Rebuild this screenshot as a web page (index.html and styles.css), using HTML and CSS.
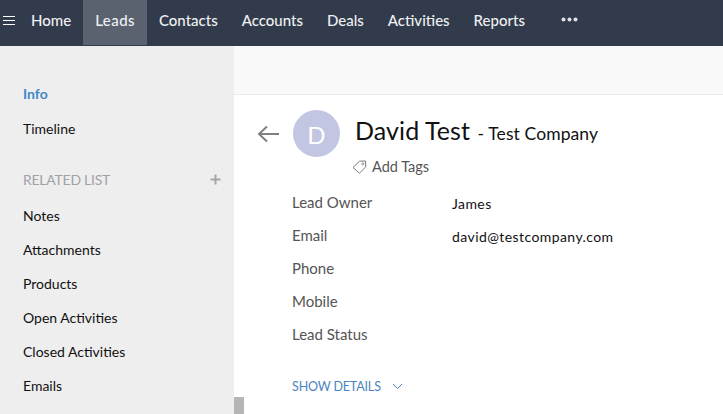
FILE: index.html
```html
<!DOCTYPE html>
<html lang="en">
<head>
<meta charset="utf-8">
<title>David Test</title>
<link rel="stylesheet" href="styles.css">
</head>
<body>
<nav class="topbar">
  <svg class="burger" width="14" height="10" viewBox="0 0 14 10"><path d="M0 .5h12M0 4.5h12M0 8.5h12" stroke="#fff" stroke-width="1"/></svg>
  <a class="tab">Home</a>
  <a class="tab active">Leads</a>
  <a class="tab">Contacts</a>
  <a class="tab">Accounts</a>
  <a class="tab">Deals</a>
  <a class="tab">Activities</a>
  <a class="tab">Reports</a>
  <svg class="more" width="17" height="5" viewBox="0 0 17 5"><circle cx="2.5" cy="2.5" r="2" fill="#dfe1e5"/><circle cx="8.5" cy="2.5" r="2" fill="#dfe1e5"/><circle cx="14.5" cy="2.5" r="2" fill="#dfe1e5"/></svg>
</nav>
<div class="layout">
  <aside class="sidebar">
    <a class="side-link current">Info</a>
    <a class="side-link timeline">Timeline</a>
    <div class="side-head"><span>RELATED LIST</span><svg width="11" height="11" viewBox="0 0 11 11"><path d="M5.5 0.5v10M0.5 5.5h10" stroke="#a3a5a9" stroke-width="2"/></svg></div>
    <ul class="side-list">
      <li>Notes</li>
      <li>Attachments</li>
      <li>Products</li>
      <li>Open Activities</li>
      <li>Closed Activities</li>
      <li>Emails</li>
    </ul>
  </aside>
  <div class="scroll-track"><div class="scroll-thumb"></div></div>
  <main class="content">
    <div class="subbar"></div>
    <section class="record">
      <svg class="back" width="23" height="18" viewBox="0 0 23 18"><path d="M22 9H2M10 1.5 2 9l8 7.5" fill="none" stroke="#808080" stroke-width="2"/></svg>
      <div class="record-body">
        <div class="title-row">
          <div class="avatar">D</div>
          <div class="title-text">
            <h1 class="name">David Test <small class="company">- Test Company</small></h1>
            <div class="tags">
              <svg width="15" height="14" viewBox="0 0 15 14"><path d="M1 7.5 7.5 1.2 13.5 1l.3 5.8-6.4 6.4z" fill="none" stroke="#777" stroke-width="1"/><circle cx="10.8" cy="3.9" r="1" fill="none" stroke="#777" stroke-width=".8"/></svg>
              <span>Add Tags</span>
            </div>
          </div>
        </div>
        <dl class="fields">
          <div class="field"><dt>Lead Owner</dt><dd>James</dd></div>
          <div class="field"><dt>Email</dt><dd>david@testcompany.com</dd></div>
          <div class="field"><dt>Phone</dt><dd></dd></div>
          <div class="field"><dt>Mobile</dt><dd></dd></div>
          <div class="field"><dt>Lead Status</dt><dd></dd></div>
        </dl>
        <a class="show-details">SHOW DETAILS
          <svg width="11" height="7" viewBox="0 0 11 7"><path d="M1 1l4.5 4.5L10 1" fill="none" stroke="#4a84c0" stroke-width="1"/></svg>
        </a>
      </div>
    </section>
  </main>
</div>
</body>
</html>
```
FILE: styles.css
```css
* { box-sizing: border-box; }
html, body { margin: 0; height: 100%; overflow: hidden; }
body {
  font-family: "Lato", "Liberation Sans", sans-serif;
  font-size: 14px;
  background: #fff;
  color: #111;
  display: flex;
  flex-direction: column;
}
.topbar {
  height: 46px;
  flex: none;
  background: #323b4b;
  display: flex;
  align-items: flex-start;
}
.burger { margin: 16px 2px 0 3px; flex: none; }
.tab {
  height: 45px;
  line-height: 41px;
  padding: 0 12px;
  color: #eef0f2;
  font-size: 15px;
  font-weight: 500;
}
.tab.active { background: #5a626f; letter-spacing: .45px; }
.more { margin: 17px 0 0 24px; }
.layout { flex: 1; display: flex; min-height: 0; }
.sidebar {
  width: 234px;
  flex: none;
  background: #eeeeee;
  padding: 40px 13px 0 23px;
}
.side-link { display: block; height: 16px; line-height: 16px; }
.current { color: #3f88c5; font-weight: 700; }
.timeline { margin-top: 19px; }
.side-head {
  margin-top: 34px;
  display: flex;
  justify-content: space-between;
  align-items: center;
  color: #a0a2a7;
  height: 16px;
  letter-spacing: -.25px;
}
.side-list { list-style: none; margin: 12px 0 0; padding: 0; }
.side-list li { height: 34px; line-height: 34px; }
.scroll-track { width: 10px; flex: none; display: flex; flex-direction: column; justify-content: flex-end; margin-right: -10px; position: relative; z-index: 1; }
.scroll-thumb { height: 17px; background: #b5b5b5; }
.content { flex: 1; min-width: 0; display: flex; flex-direction: column; }
.subbar { height: 49px; flex: none; background: #f9f9f9; border-bottom: 1px solid #ebebeb; }
.record { display: flex; padding: 30px 0 0 23px; }
.back { flex: none; }
.record-body { margin-left: 12px; flex: 1; }
.title-row { display: flex; }
.avatar {
  width: 47px; height: 47px;
  margin: -15px 0 0 1px;
  border-radius: 50%;
  background: #c3c6e3;
  color: #fff;
  font-size: 24px;
  text-align: center;
  line-height: 50px;
}
.title-text { margin-left: 15px; margin-top: -11px; }
.name { margin: 0; font-size: 25px; font-weight: 400; line-height: 32px; color: #111; letter-spacing: .1px; }
.company { font-size: 17.5px; margin-left: 1px; }
.tags { display: flex; align-items: center; gap: 5px; margin-top: 8px; margin-left: -3px; color: #555; font-size: 14.5px; }
.fields { margin: 17px 0 0; }
.field { display: flex; height: 33px; align-items: flex-start; }
dt { width: 160px; color: #555; line-height: 20px; font-size: 15px; }
dd { margin: 2px 0 0; color: #111; line-height: 20px; font-size: 14px; letter-spacing: .42px; }
.show-details { display: flex; align-items: center; gap: 11px; margin-top: 22px; color: #4a84c0; font-size: 12.5px; letter-spacing: -.15px; }
```
